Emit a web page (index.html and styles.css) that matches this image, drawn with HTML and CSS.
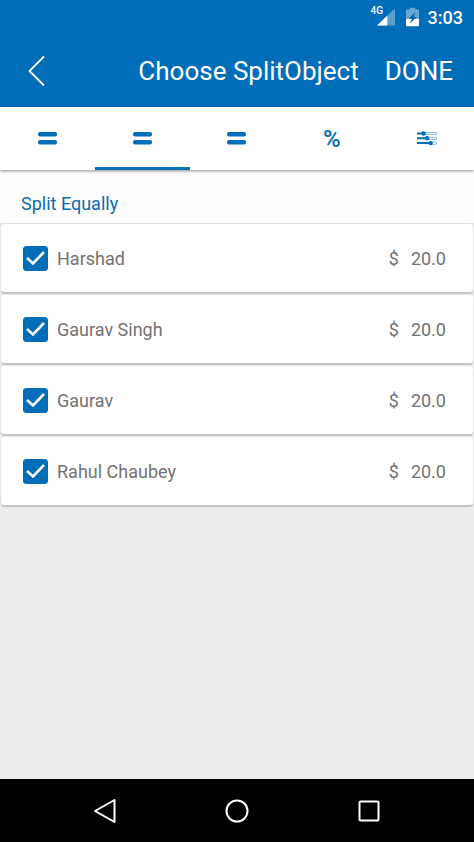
FILE: index.html
```html
<!DOCTYPE html>
<html lang="en">
<head>
<meta charset="utf-8">
<meta name="viewport" content="width=device-width, initial-scale=1">
<title>Choose SplitObject</title>
<link rel="stylesheet" href="styles.css">
</head>
<body>
<header class="top">
  <div class="status">
    <span class="signal">
      <svg width="19" height="18" viewBox="0 0 20 18" aria-hidden="true"><path d="M20 0V18H1z" fill="#fff" opacity=".35"/><path d="M12 7.500V18H1z" fill="#fff"/></svg>
      <span class="network">4G</span>
    </span>
    <svg width="13" height="20" viewBox="0 0 14 20" aria-hidden="true"><path d="M4 0h6v2h3q1 0 1 1v9H0V3q0-1 1-1h3z" fill="#fff" opacity=".4"/><path d="M0 12h14v7q0 1-1 1H1q-1 0-1-1z" fill="#fff"/><path d="M10 5 3 12h3.500L4 17l7.500-7H8z" fill="#0058a0"/></svg>
    <span>3:03</span>
  </div>
  <div class="bar">
    <button class="back" aria-label="Back"><svg width="18" height="32" viewBox="0 0 18 32"><path d="M16 1.500 1.500 16 16 30.500" fill="none" stroke="#fff" stroke-width="1.800"/></svg></button>
    <h1 class="title">Choose SplitObject</h1>
    <button class="done">DONE</button>
  </div>
</header>
<nav class="tabs">
  <button class="tab" aria-label="Equal"><svg width="19" height="13" viewBox="0 0 19 13"><rect width="19" height="4.500" rx="2"/><rect y="8" width="19" height="4.500" rx="2"/></svg></button>
  <button class="tab active" aria-label="Split equally"><svg width="19" height="13" viewBox="0 0 19 13"><rect width="19" height="4.500" rx="2"/><rect y="8" width="19" height="4.500" rx="2"/></svg></button>
  <button class="tab" aria-label="Shares"><svg width="19" height="13" viewBox="0 0 19 13"><rect width="19" height="4.500" rx="2"/><rect y="8" width="19" height="4.500" rx="2"/></svg></button>
  <button class="tab">%</button>
  <button class="tab" aria-label="Adjust"><svg width="20" height="15" viewBox="0 0 20 15"><g fill="#fff" stroke="#5f9fd0" stroke-width=".7"><rect x="6" y="1.400" width="13.500" height="2.200"/><rect x="10" y="6.200" width="9.500" height="2.200"/><rect x="14" y="11" width="5.500" height="2.200"/></g><path d="M0 1.500h5v2H0zM0 6.300h8v2H0zM0 11.100h12v2H0z"/><circle cx="6.500" cy="2.500" r="2.200"/><circle cx="10" cy="7.300" r="2.200"/><circle cx="13.700" cy="12.100" r="2.200"/></svg></button>
</nav>
<main class="content">
  <h2 class="section">Split Equally</h2>
  <ul class="list">
    <li class="card"><label class="person"><input type="checkbox" class="check" checked>Harshad</label><span class="amount"><span>$</span><span>20.0</span></span></li>
    <li class="card"><label class="person"><input type="checkbox" class="check" checked>Gaurav Singh</label><span class="amount"><span>$</span><span>20.0</span></span></li>
    <li class="card"><label class="person"><input type="checkbox" class="check" checked>Gaurav</label><span class="amount"><span>$</span><span>20.0</span></span></li>
    <li class="card"><label class="person"><input type="checkbox" class="check" checked>Rahul Chaubey</label><span class="amount"><span>$</span><span>20.0</span></span></li>
  </ul>
</main>
<footer class="system">
  <button class="key" aria-label="Back"><svg width="24" height="26" viewBox="0 0 24 26"><path d="M21.500 2v22L2 13z"/></svg></button>
  <button class="key" aria-label="Home"><svg width="24" height="24" viewBox="0 0 24 24"><circle cx="12" cy="12" r="10.500"/></svg></button>
  <button class="key" aria-label="Recent apps"><svg width="22" height="22" viewBox="0 0 22 22"><rect x="1.500" y="1.500" width="19" height="19" rx="1"/></svg></button>
</footer>
</body>
</html>
```
FILE: styles.css
```css
* { box-sizing: border-box; }
body {
  margin: 0;
  min-height: 100vh;
  display: flex;
  flex-direction: column;
  background: #ededed;
  color: #737373;
  font-family: Roboto, "Liberation Sans", sans-serif;
  font-size: 18px;
}
button {
  border: 0;
  padding: 0;
  background: none;
  color: inherit;
  font: inherit;
}
svg { display: block; }
.top { background: #006db9; color: #fff; }
.status {
  height: 34px;
  padding: 0 11px;
  display: flex;
  align-items: center;
  justify-content: flex-end;
  font-weight: 500;
}
.status > svg { margin: 0 9px 0 11px; }
.signal { position: relative; }
.network {
  position: absolute;
  top: -3px;
  left: -5px;
  font-size: 10px;
  line-height: 12px;
}
.bar {
  height: 73px;
  padding: 0 21px 0 28px;
  display: flex;
  align-items: center;
  font-size: 26px;
}
.back { margin-right: auto; }
.title { margin: 0 26px 0 0; font-size: 26px; font-weight: 400; }
.tabs {
  position: relative;
  height: 63px;
  display: flex;
  background: #fff;
  color: #006db9;
  fill: #006db9;
  box-shadow: 0 1px 3px rgba(0, 0, 0, .45);
}
.tab {
  flex: 1;
  display: flex;
  align-items: center;
  justify-content: center;
  border-top: 3px solid transparent;
  border-bottom: 3px solid transparent;
  font-size: 24px;
  font-weight: 500;
}
.tab.active { border-bottom-color: #0b72b5; }
.content { flex: 1; }
.section {
  margin: 0;
  height: 53px;
  padding: 22px 21px 0;
  background: #fdfdfd;
  color: #0c6bb0;
  font-size: 18px;
  font-weight: 400;
  line-height: 24px;
}
.list {
  margin: 0;
  padding: 1px 1px 0;
  display: grid;
  gap: 3px;
  list-style: none;
  background: linear-gradient(#e2e2e2, #ededed 4px);
}
.card {
  height: 68px;
  padding: 0 27px 0 22px;
  display: flex;
  align-items: center;
  justify-content: space-between;
  background: #fff;
  border-radius: 3px;
  box-shadow: 0 2px 1px #c4c4c4, 0 0 1px #ccc;
}
.person { display: flex; align-items: center; gap: 9px; }
.check {
  appearance: none;
  margin: 0;
  width: 25px;
  height: 25px;
  border-radius: 3px;
  border: 1px solid #006db9;
}
.check:checked {
  background: #006db9 url("data:image/svg+xml,%3Csvg xmlns='http://www.w3.org/2000/svg' viewBox='0 0 23 23'%3E%3Cpath d='M3 11l6 5.500L20 5' fill='none' stroke='white' stroke-width='2.600'/%3E%3C/svg%3E") center / 23px 23px no-repeat;
}
.amount { display: flex; gap: 12px; }
.system {
  height: 63px;
  padding: 0 39px;
  display: flex;
  align-items: center;
  background: #000;
  fill: none;
  stroke: #fff;
  stroke-width: 2;
  stroke-linejoin: round;
}
.key { flex: 1; display: flex; justify-content: center; }
```
